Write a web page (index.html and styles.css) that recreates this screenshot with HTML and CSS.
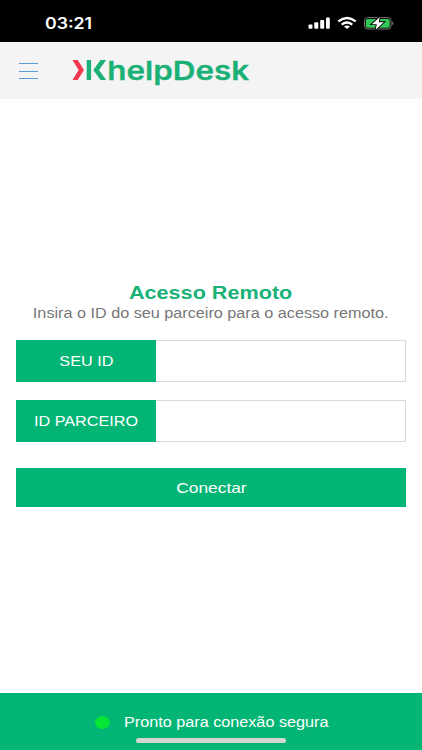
FILE: index.html
```html
<!DOCTYPE html>
<html lang="pt-BR">
<head>
    <meta charset="UTF-8">
    <meta name="viewport" content="width=device-width, initial-scale=1.0">
    <title>KhelpDesk</title>
    <link rel="stylesheet" href="styles.css">
</head>
<body>
    <div class="status-bar">
        <span class="time"><span class="wide">03:21</span></span>
        <svg class="status-icons" width="86" height="16" viewBox="0 0 86 16">
            <g fill="#fff">
                <rect x="0.5" y="8.5" width="4" height="4.3" rx="1"/>
                <rect x="6.3" y="6.3" width="4" height="6.5" rx="1"/>
                <rect x="12.2" y="4" width="4" height="8.8" rx="1"/>
                <rect x="18" y="1.6" width="3.8" height="11.2" rx="1"/>
            </g>
            <g fill="none" stroke="#fff" stroke-width="2.2">
                <path d="M30.3 5.4Q39 -1.4 47.7 5.4"/>
                <path d="M33.7 8.7Q39 4.3 44.3 8.7"/>
            </g>
            <path d="M36 10.5Q39 8.4 42 10.5L39 13Z" fill="#fff"/>
            <rect x="56.5" y="1.6" width="26.5" height="11.4" rx="3" fill="none" stroke="#777"/>
            <rect x="57.8" y="2.9" width="23.9" height="8.8" rx="1.8" fill="#34c759"/>
            <path d="M71.8 1L63.8 8.2H68.8L67.6 13.8L75.8 6.2H70.7Z" fill="#fff" stroke="#000" stroke-width="1.8" paint-order="stroke"/>
            <path d="M84.8 5.8v3" stroke="#777" stroke-width="1.2"/>
        </svg>
    </div>

    <header class="header">
        <button class="menu" aria-label="Menu"><i></i><i></i><i></i></button>
        <svg class="logo" width="180" height="34" viewBox="0 0 180 34">
            <path d="M0.5 3H5.7L12 13L5.7 23H0.5L6.6 13Z" fill="#f0384f"/>
            <path d="M14.7 3H19.1V23H14.7Z" fill="#1bb176"/>
            <path d="M28.5 3H34.2L27 13L34.2 23H28.5L21.3 13Z" fill="#1bb176"/>
            <text x="35.2" y="22.8" textLength="142" lengthAdjust="spacingAndGlyphs">helpDesk</text>
        </svg>
    </header>

    <main class="content">
        <h1><span class="wide">Acesso Remoto</span></h1>
        <p><span class="wide">Insira o ID do seu parceiro para o acesso remoto.</span></p>

        <div class="field">
            <label for="seuId"><span class="wide">SEU ID</span></label>
            <input id="seuId" type="text" readonly>
        </div>
        <div class="field">
            <label for="idParceiro"><span class="wide">ID PARCEIRO</span></label>
            <input id="idParceiro" type="text">
        </div>

        <button class="connect"><span class="wide">Conectar</span></button>
    </main>

    <footer class="footer">
        <div class="state">
            <span class="dot"></span>
            <span class="state-text"><span class="wide">Pronto para conexão segura</span></span>
        </div>
        <div class="home-bar"></div>
    </footer>
</body>
</html>
```

FILE: styles.css
```css
* {
    box-sizing: border-box;
}
body {
    margin: 0;
    height: 750px;
    display: flex;
    flex-direction: column;
    overflow: hidden;
    background-color: #fff;
    font-family: "Liberation Sans", Arial, sans-serif;
    font-size: 14px;
}
/* extended lettering */
.wide {
    display: inline-block;
    white-space: nowrap;
    transform: scaleX(1.157);
}
.status-bar {
    height: 42px;
    display: flex;
    justify-content: space-between;
    padding: 14px 28px 0 45px;
    background-color: #000;
    color: #fff;
}
.time {
    font-family: Inter, sans-serif;
    font-size: 15.3px;
    font-weight: 600;
    line-height: 19px;
}
.time .wide {
    transform-origin: left;
}
.status-icons {
    margin-top: 2px;
}
.header {
    height: 57px;
    display: flex;
    padding: 16px 19px 0;
    background-color: #f4f4f4;
}
.menu {
    width: 19px;
    height: 25px;
    display: flex;
    flex-direction: column;
    justify-content: space-between;
    padding: 5px 0 4px;
    border: none;
    background: none;
}
.menu i {
    width: 19px;
    height: 1px;
    flex: none;
    background-color: #5b9bd8;
}
.logo {
    margin-left: 34px;
    margin-top: -1px;
    overflow: visible;
}
.logo text {
    fill: #1bb176;
    font-family: Inter, sans-serif;
    font-size: 26px;
    font-weight: 600;
    stroke: #1bb176;
    stroke-width: 0.3px;
}
.content {
    flex: 1;
    display: flex;
    flex-direction: column;
    padding: 182px 16px 0;
    text-align: center;
}
h1 {
    margin: 0;
    color: #18b277;
    font-size: 18.7px;
    line-height: 24px;
}
p {
    margin: 0 0 18px;
    color: #777;
    line-height: 17px;
}
.field {
    height: 42px;
    display: flex;
    margin-bottom: 18px;
}
.field label {
    width: 140px;
    background-color: #03b575;
    color: #fff;
    line-height: 43px;
}
.field input {
    flex: 1;
    min-width: 0;
    border: 1px solid #d9d9d9;
    border-left: none;
    border-radius: 0;
    padding: 0 12px;
    font: inherit;
    outline: none;
}
.connect {
    height: 39px;
    margin-top: 8px;
    padding: 0;
    border: none;
    background-color: #03b575;
    color: #fff;
    font-family: inherit;
    font-size: 15px;
}
.footer {
    height: 57px;
    padding-top: 19px;
    background-color: #03b575;
    color: #fff;
}
.state {
    height: 20px;
    display: flex;
    align-items: center;
    padding-left: 95px;
}
.dot {
    width: 15px;
    height: 13px;
    margin-right: 14px;
    border-radius: 50%;
    background-color: #05e535;
}
.state-text .wide {
    transform-origin: left;
}
.home-bar {
    width: 150px;
    height: 5px;
    margin: 6px auto 0;
    border-radius: 3px;
    background-color: #d3d8d5;
}
```
